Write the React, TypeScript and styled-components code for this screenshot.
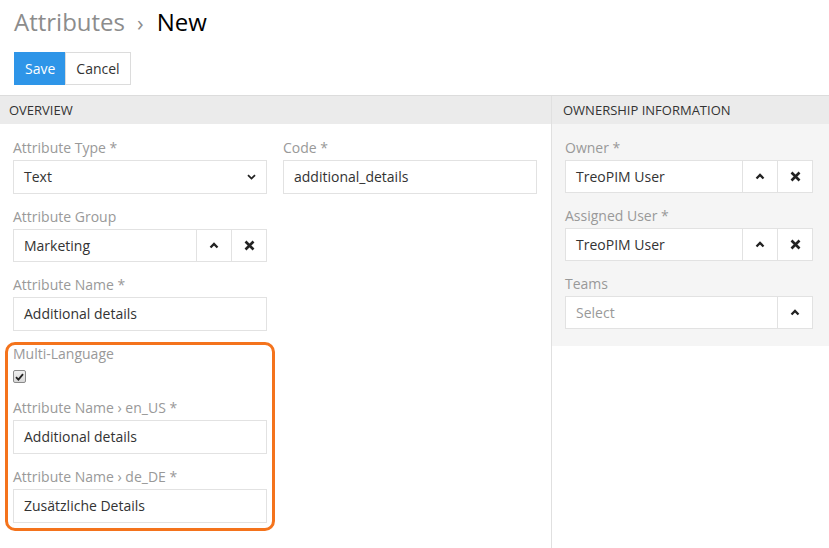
import React from 'react';
import styled, { createGlobalStyle } from 'styled-components';

const GlobalStyle = createGlobalStyle`
  html, body {
    margin: 0;
    padding: 0;
    background: #fff;
    font-family: "Open Sans", "Liberation Sans", Arial, sans-serif;
    color: #333;
  }
  * { box-sizing: border-box; }
`;

const Page = styled.div`
  display: flex;
  flex-direction: column;
  min-height: 548px;
`;

const Title = styled.h1`
  margin: 0;
  padding: 7px 14px 0;
  font-size: 24px;
  line-height: 30px;
  font-weight: 400;
  color: #000;
`;

const Crumb = styled.span`
  color: #8c8c8c;
`;

const Separator = styled.span`
  color: #8c8c8c;
  margin: 0 13px 0 12px;
  font-size: 22px;
`;

const Toolbar = styled.div`
  display: flex;
  padding: 15px 14px 10px;
`;

const Button = styled.button<{ primary?: boolean }>`
  height: 33px;
  padding: 0 10px;
  font-family: inherit;
  font-size: 14px;
  border: 1px solid ${p => (p.primary ? '#2e95e8' : '#dcdcdc')};
  background: ${p => (p.primary ? '#2e95e8' : '#fff')};
  color: ${p => (p.primary ? '#fff' : '#333')};
  margin-left: ${p => (p.primary ? '0' : '-1px')};
  cursor: pointer;
`;

const Layout = styled.div`
  flex: 1;
  display: grid;
  grid-template-columns: 551px 1fr;
  border-top: 1px solid #dcdcdc;
`;

const Column = styled.div<{ side?: boolean }>`
  display: flex;
  flex-direction: column;
  border-left: ${p => (p.side ? '1px solid #e0e0e0' : 'none')};
`;

const PanelHeader = styled.div<{ side?: boolean }>`
  height: 28px;
  line-height: 28px;
  background: #ebebeb;
  padding-left: ${p => (p.side ? '11px' : '9px')};
  font-size: 13px;
  text-transform: uppercase;
  color: #333;
`;

const PanelBody = styled.div<{ side?: boolean }>`
  display: flex;
  gap: 16px;
  padding: ${p => (p.side ? '14px 15px 17px 13px' : '14px 0 0 13px')};
  background: ${p => (p.side ? '#f5f5f5' : '#fff')};
`;

const Stack = styled.div<{ width: number }>`
  display: flex;
  flex-direction: column;
  gap: 13px;
  width: ${p => p.width}px;
`;

const Field = styled.div`
  display: flex;
  flex-direction: column;
`;

const Label = styled.label`
  font-size: 14px;
  line-height: 20px;
  color: #999;
  margin-bottom: 2px;
`;

const Input = styled.div<{ placeholder?: boolean }>`
  flex: 1;
  height: 33px;
  line-height: 31px;
  border: 1px solid #e2e2e2;
  background: #fff;
  padding: 0 10px 1px;
  font-size: 14px;
  color: ${p => (p.placeholder ? '#999' : '#333')};
  display: flex;
  align-items: center;
  justify-content: space-between;
`;

const InputRow = styled.div`
  display: flex;
`;

const AddonButton = styled.div`
  width: 36px;
  height: 33px;
  margin-left: -1px;
  border: 1px solid #e2e2e2;
  background: #fff;
  display: flex;
  align-items: center;
  justify-content: center;
  color: #222;
`;

const Highlight = styled.div`
  position: relative;
  display: flex;
  flex-direction: column;
  gap: 13px;
  &::after {
    content: '';
    position: absolute;
    top: -2px;
    left: -8px;
    right: -8px;
    bottom: -8px;
    border: 3px solid #f4731c;
    border-radius: 10px;
    pointer-events: none;
  }
`;

const CheckBox = styled.span`
  margin-top: 4px;
  width: 13px;
  height: 13px;
  border: 1px solid #8a8a8a;
  border-radius: 2px;
  background: linear-gradient(#f0f0f0, #d8d8d8);
  display: flex;
  align-items: center;
  justify-content: center;
  margin-bottom: 2px;
`;

const ChevronUp = () => (
  <svg width="10" height="7" viewBox="0 0 10 7">
    <path d="M1.5 5.5 L5 2 L8.5 5.5" fill="none" stroke="#222" strokeWidth="2.3" />
  </svg>
);

const ChevronDown = () => (
  <svg width="9" height="6" viewBox="0 0 9 6">
    <path d="M1 1.2 L4.5 4.6 L8 1.2" fill="none" stroke="#222" strokeWidth="1.8" />
  </svg>
);

const Cross = () => (
  <svg width="11" height="11" viewBox="0 0 11 11">
    <path d="M1.5 1.5 L9.5 9.5 M9.5 1.5 L1.5 9.5" fill="none" stroke="#222" strokeWidth="2.6" />
  </svg>
);

const Check = () => (
  <svg width="9" height="8" viewBox="0 0 9 8">
    <path d="M1 4.2 L3.4 6.6 L8 1.2" fill="none" stroke="#222" strokeWidth="1.8" />
  </svg>
);

const TextField = ({ label, value }: { label: string; value: string }) => (
  <Field>
    <Label>{label}</Label>
    <Input>{value}</Input>
  </Field>
);

const LinkField = ({ label, value, clear = true, placeholder }: { label: string; value: string; clear?: boolean; placeholder?: boolean }) => (
  <Field>
    <Label>{label}</Label>
    <InputRow>
      <Input placeholder={placeholder}>{value}</Input>
      <AddonButton><ChevronUp /></AddonButton>
      {clear && <AddonButton><Cross /></AddonButton>}
    </InputRow>
  </Field>
);

export default function App() {
  return (
    <Page>
      <GlobalStyle />
      <Title>
        <Crumb>Attributes</Crumb>
        <Separator>›</Separator>
        New
      </Title>
      <Toolbar>
        <Button primary>Save</Button>
        <Button>Cancel</Button>
      </Toolbar>
      <Layout>
        <Column>
          <PanelHeader>Overview</PanelHeader>
          <PanelBody>
            <Stack width={254}>
              <Field>
                <Label>Attribute Type *</Label>
                <Input>
                  Text
                  <ChevronDown />
                </Input>
              </Field>
              <LinkField label="Attribute Group" value="Marketing" />
              <TextField label="Attribute Name *" value="Additional details" />
              <Highlight>
                <Field>
                  <Label>Multi-Language</Label>
                  <CheckBox><Check /></CheckBox>
                </Field>
                <TextField label="Attribute Name › en_US *" value="Additional details" />
                <TextField label="Attribute Name › de_DE *" value="Zusätzliche Details" />
              </Highlight>
            </Stack>
            <Stack width={254}>
              <TextField label="Code *" value="additional_details" />
            </Stack>
          </PanelBody>
        </Column>
        <Column side>
          <PanelHeader side>Ownership Information</PanelHeader>
          <PanelBody side>
            <Stack width={248}>
              <LinkField label="Owner *" value="TreoPIM User" />
              <LinkField label="Assigned User *" value="TreoPIM User" />
              <LinkField label="Teams" value="Select" clear={false} placeholder />
            </Stack>
          </PanelBody>
        </Column>
      </Layout>
    </Page>
  );
}
